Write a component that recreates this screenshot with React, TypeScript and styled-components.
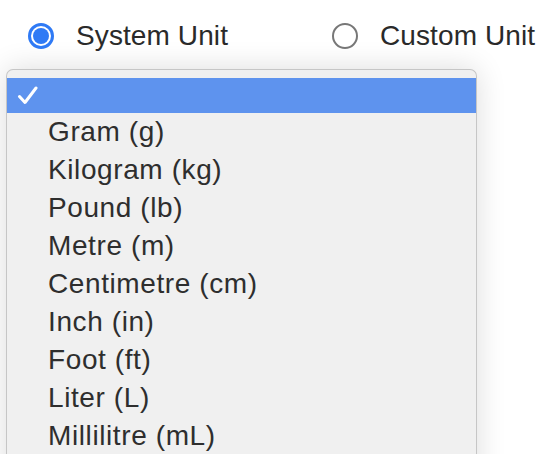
import styled, { createGlobalStyle } from 'styled-components';

const GlobalStyle = createGlobalStyle`
  html, body {
    margin: 0;
    padding: 0;
    background: #ffffff;
    overflow: hidden;
  }
  body {
    font-family: "Liberation Sans", Arial, sans-serif;
    -webkit-font-smoothing: antialiased;
  }
`;

const Page = styled.div`
  height: 454px;
  overflow: hidden;
  padding-top: 10px;
  box-sizing: border-box;
`;

const RadioRow = styled.div`
  display: grid;
  grid-template-columns: 304px auto;
  padding-left: 28px;
  height: 52px;
  align-items: center;
`;

const RadioItem = styled.label`
  display: flex;
  align-items: center;
  gap: 22px;
  font-size: 28px;
  letter-spacing: 0.1px;
  color: #2a2a2a;
`;

const RadioCircle = styled.span<{ $checked?: boolean }>`
  box-sizing: border-box;
  width: 26px;
  height: 26px;
  border-radius: 50%;
  background: #ffffff;
  border: ${(p) => (p.$checked ? '3px solid #2f7af5' : '2px solid #777777')};
  display: flex;
  align-items: center;
  justify-content: center;
  flex-shrink: 0;

  &::after {
    content: '';
    display: ${(p) => (p.$checked ? 'block' : 'none')};
    width: 16px;
    height: 16px;
    border-radius: 50%;
    background: #2f7af5;
  }
`;

const Menu = styled.div`
  box-sizing: border-box;
  margin: 7px 0 0 6px;
  width: 471px;
  height: 420px;
  background: #f0f0f0;
  border: 1px solid #c6c6c6;
  border-bottom: none;
  border-radius: 7px 7px 0 0;
  padding-top: 8px;
  box-shadow: 0 0 30px rgba(0, 0, 0, 0.14);
`;

const Option = styled.div<{ $selected?: boolean }>`
  display: flex;
  align-items: center;
  height: ${(p) => (p.$selected ? '35px' : '38px')};
  padding-left: ${(p) => (p.$selected ? '10px' : '41px')};
  background: ${(p) => (p.$selected ? '#5e93ee' : 'transparent')};
  color: #2e2e2e;
  font-size: 28px;
  letter-spacing: 0.6px;
  white-space: nowrap;
`;

const Check = () => (
  <svg width="21" height="19" viewBox="0 0 21 19" fill="none">
    <polyline
      points="2.5,10.5 8,16.5 19,2"
      stroke="#ffffff"
      strokeWidth="3"
      strokeLinecap="round"
      strokeLinejoin="round"
    />
  </svg>
);

const units = [
  'Gram (g)',
  'Kilogram (kg)',
  'Pound (lb)',
  'Metre (m)',
  'Centimetre (cm)',
  'Inch (in)',
  'Foot (ft)',
  'Liter (L)',
  'Millilitre (mL)',
];

export default function App() {
  return (
    <>
      <GlobalStyle />
      <Page>
        <RadioRow>
          <RadioItem>
            <RadioCircle $checked />
            System Unit
          </RadioItem>
          <RadioItem>
            <RadioCircle />
            Custom Unit
          </RadioItem>
        </RadioRow>
        <Menu>
          <Option $selected>
            <Check />
          </Option>
          {units.map((u) => (
            <Option key={u}>{u}</Option>
          ))}
        </Menu>
      </Page>
    </>
  );
}
